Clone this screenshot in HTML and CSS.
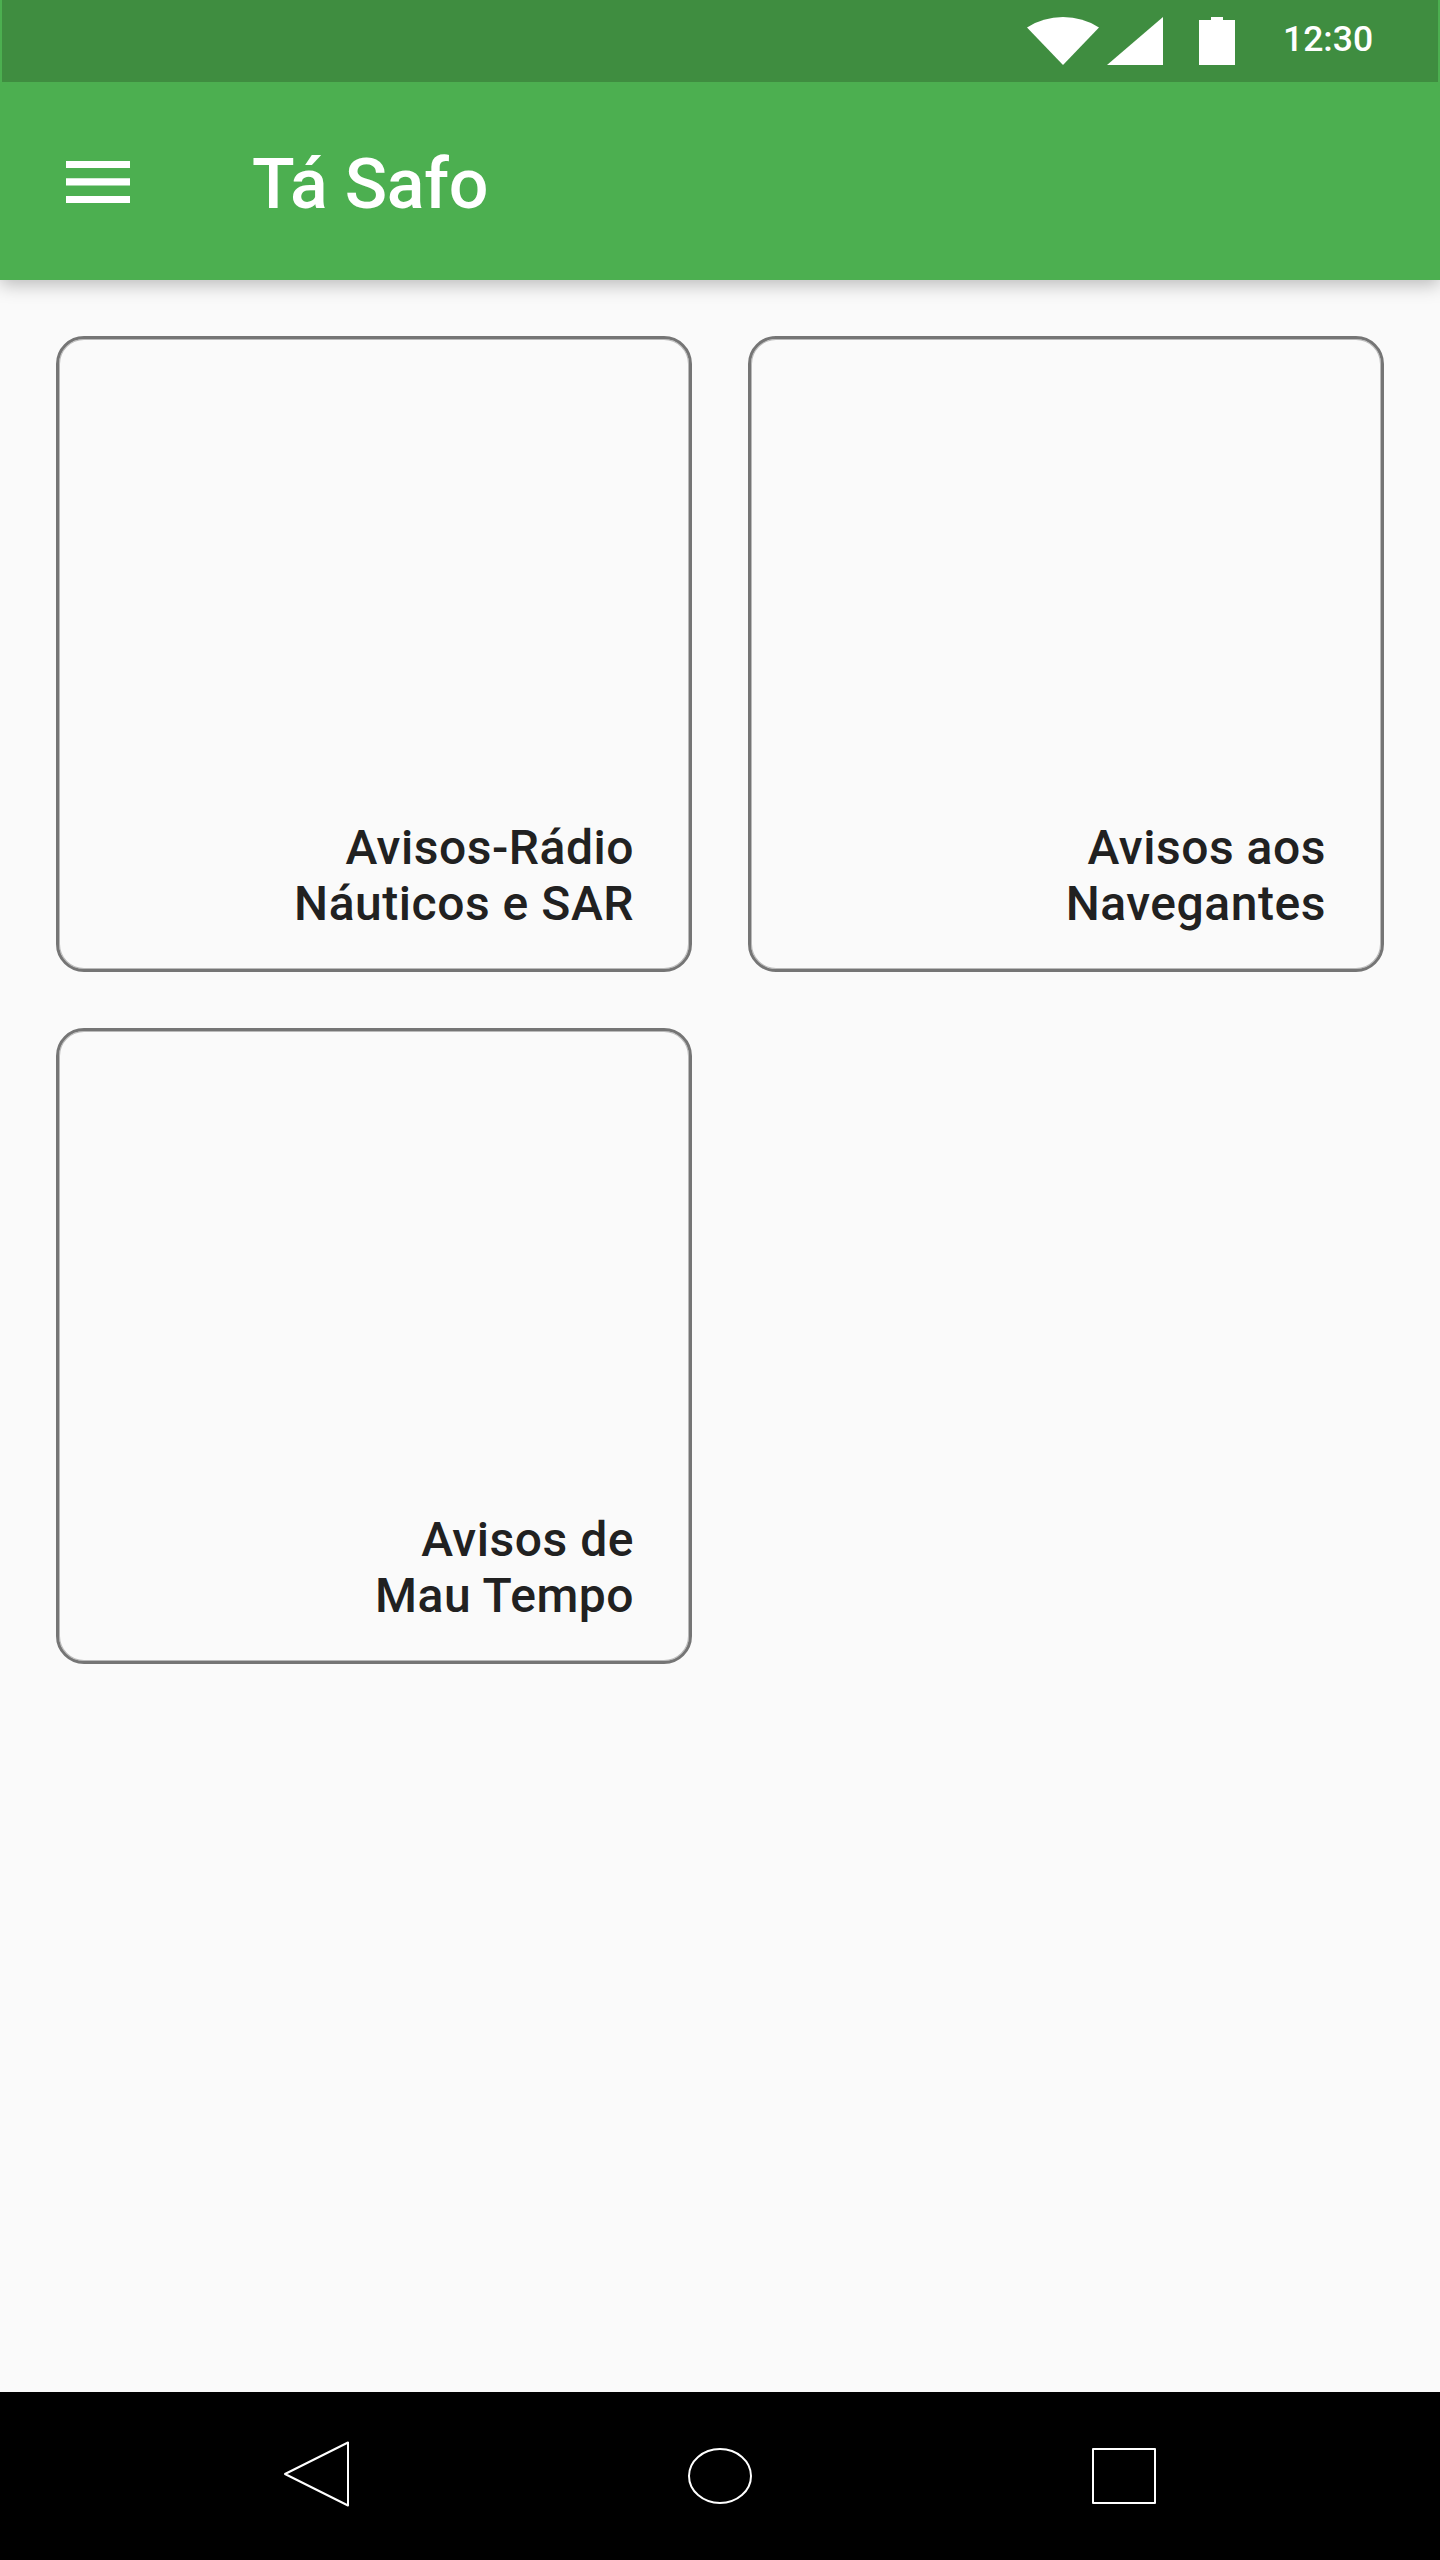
FILE: index.html
```html
<!DOCTYPE html>
<html lang="pt">
<head>
<meta charset="utf-8">
<title>Tá Safo</title>
<link rel="stylesheet" href="styles.css">
</head>
<body>
<header class="header">
  <div class="status-bar">
    <svg class="status-icons" width="208" height="48" viewBox="0 0 208 48" fill="#fff" aria-hidden="true">
      <path d="M36 48L0 10.5Q16 0 36 0T72 10.5Z"/>
      <path d="M136 0V48H80Z"/>
      <path d="M184 0h12v3h12v45h-36V3h12Z"/>
    </svg>
    <span class="clock">12:30</span>
  </div>
  <div class="app-bar">
    <svg class="menu-icon" width="64" height="42" viewBox="0 0 64 42" fill="#fff" role="img" aria-label="Menu">
      <path d="M0 0h64v7H0ZM0 17.2h64v7.2H0ZM0 35h64v7H0Z"/>
    </svg>
    <h1 class="title">Tá Safo</h1>
  </div>
</header>
<main class="cards">
  <a class="card"><span class="card-label">Avisos-Rádio<br>Náuticos e SAR</span></a>
  <a class="card"><span class="card-label">Avisos aos<br>Navegantes</span></a>
  <a class="card"><span class="card-label">Avisos de<br>Mau Tempo</span></a>
</main>
<nav class="nav-bar">
  <svg class="nav-icon" viewBox="0 0 72 72"><path d="M5 34L68 2.5V65.5Z"/></svg>
  <svg class="nav-icon" viewBox="0 0 72 72"><ellipse cx="36" cy="36" rx="31" ry="27"/></svg>
  <svg class="nav-icon" viewBox="0 0 72 72"><path d="M5 9H67V63H5Z"/></svg>
</nav>
</body>
</html>
```

FILE: styles.css
```css
* {
  box-sizing: border-box;
}

body {
  margin: 0;
  width: 1440px;
  height: 2560px;
  display: flex;
  flex-direction: column;
  background: #fafafa;
  color: #212121;
  font-family: Roboto, "Liberation Sans", sans-serif;
  font-weight: 500;
}

.header {
  height: 280px;
  background: #4caf50;
  color: #fff;
  box-shadow: 0 5px 17px rgba(0, 0, 0, 0.25);
}

.status-bar {
  height: 82px;
  margin: 0 2px;
  padding-left: 1025px;
  display: flex;
  align-items: center;
  background: #3f8d40;
}

.clock {
  margin: -4px 0 0 48px;
  font-size: 35.5px;
  line-height: 42px;
}

.app-bar {
  height: 198px;
  padding: 2px 66px 0;
  display: flex;
  align-items: center;
  gap: 122px;
}

.title {
  margin: 4px 0 0;
  font-size: 70px;
  font-weight: 500;
  line-height: 84px;
  letter-spacing: -0.2px;
}

.cards {
  flex: 1;
  padding: 56px;
  display: grid;
  grid-template-columns: 636px 636px;
  grid-auto-rows: 636px;
  gap: 56px;
}

.card {
  padding: 0 55px 37px;
  display: flex;
  align-items: flex-end;
  justify-content: flex-end;
  border: 3px solid #757575;
  border-radius: 28px;
  box-shadow: inset 0 0 0 1px #bababa;
}

.card-label {
  font-size: 48px;
  line-height: 56px;
  letter-spacing: 0.53px;
  text-align: right;
}

.nav-bar {
  height: 168px;
  display: grid;
  grid-template-columns: repeat(3, 404px);
  justify-content: center;
  align-items: center;
  justify-items: center;
  background: #000;
}

.nav-icon {
  width: 72px;
  height: 72px;
  fill: none;
  stroke: #fff;
  stroke-width: 2;
  stroke-linejoin: round;
}
```
